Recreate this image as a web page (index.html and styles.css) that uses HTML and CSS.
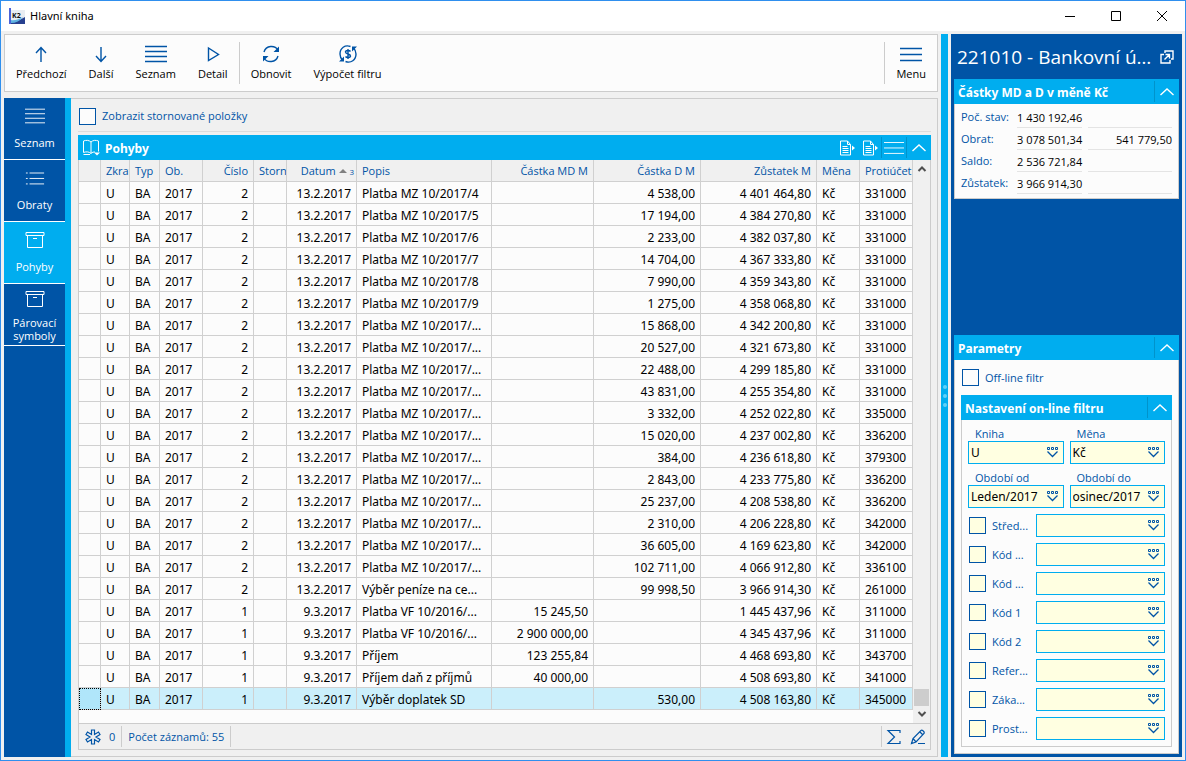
FILE: index.html
```html
<!DOCTYPE html>
<html lang="cs">
<head>
  <meta charset="UTF-8">
  <meta name="viewport" content="width=device-width, initial-scale=1.0">
  <title>Hlavní kniha</title>
  <link rel="stylesheet" href="styles.css">
</head>
<body>
  <svg class="sprite" aria-hidden="true">
    <symbol id="i-lines" viewBox="0 0 22 18"><path d="M0 1.5h22M0 6.5h22M0 11.5h22M0 16.5h22"/></symbol>
    <symbol id="i-menu" viewBox="0 0 22 18"><path d="M0 3.5h22M0 9.5h22M0 15.5h22"/></symbol>
    <symbol id="i-box" viewBox="0 0 20 18"><path d="M1 1.5h18v3H1zM2.500 4.500v12h15v-12M8 7.500h4"/></symbol>
    <symbol id="i-up" viewBox="0 0 14 8"><path d="M.5 7L7 1l6.500 6"/></symbol>
    <symbol id="i-doc" viewBox="0 0 16 16"><path d="M1.500 1h7l3 3.500V15H1.500zM8.500 1v3.500h3M3.500 6.500h5M3.500 8.500h6M3.500 10.500h6M3.500 12.500h6"/><path d="M13 5.500l3 2.500-3 2.500z" fill="currentColor" stroke="none"/></symbol>
    <symbol id="i-pick" viewBox="0 0 12 11"><path d="M.5 .5h2v2h-2zM4.500 .5h2v2h-2zM8.500 .5h2v2h-2z"/><path d="M.5 4.500l5 5 5-5" stroke-width="1.300"/></symbol>
  </svg>

  <header class="titlebar">
    <svg class="logo" viewBox="0 0 16 16" aria-hidden="true">
      <path d="M2 2h14v10H2z" fill="#e9edf2"/>
      <path d="M0 0h2v16H0z" fill="#4a63d8"/>
      <path d="M2 13c5 0 9-1 14-4v7H2z" fill="#27408f"/>
      <path d="M2 12c4 1 8-1 12-3-3 4-7 6-12 6z" fill="#5fb3e2"/>
      <text x="3" y="10" font-size="7" font-weight="700" fill="#111">K2</text>
    </svg>
    <h1>Hlavní kniha</h1>
    <div class="window-buttons">
      <button type="button" aria-label="Minimalizovat"><svg viewBox="0 0 12 12"><path d="M1 6.500h10"/></svg></button>
      <button type="button" aria-label="Maximalizovat"><svg viewBox="0 0 12 12"><path d="M1.500 1.500h9v9h-9z"/></svg></button>
      <button type="button" aria-label="Zavřít"><svg viewBox="0 0 12 12"><path d="M1 1l10 10M11 1L1 11"/></svg></button>
    </div>
  </header>

  <div class="window">
    <div class="left">
      <div class="toolbar">
        <button type="button"><svg class="bold" viewBox="0 0 22 18"><path d="M11 17V3M6 8l5-5.500L16 8"/></svg>Předchozí</button>
        <button type="button"><svg class="bold" viewBox="0 0 22 18"><path d="M11 2v14M6 11l5 5.500 5-5.500"/></svg>Další</button>
        <button type="button"><svg class="bold"><use href="#i-lines"/></svg>Seznam</button>
        <button type="button"><svg class="bold" viewBox="0 0 22 18"><path d="M6.500 3l10 6.500-10 6z"/></svg>Detail</button>
        <span class="divider"></span>
        <button type="button"><svg class="bold" viewBox="0 0 22 18"><path d="M4 7C6 0 15 0 18 5M18 11c-2 7-11 7-14 2"/><path d="M19 1.500V7h-5.500zM3 16.500V11h5.500z" fill="currentColor" stroke="none"/></svg>Obnovit</button>
        <button type="button"><svg class="bold" viewBox="0 0 22 18"><path d="M13.500 1.500C8-.5 3 3 3 9c0 2.500 1 4.500 2.500 6M8.500 16.500c5.500 2 10.500-1.500 10.500-7.500 0-2.500-1-4.500-2.500-6M13.500 6.500c-1-1.500-5-1.500-5 .5 0 2.500 5 1.500 5 4 0 2-4 2-5 .5M11 4v10"/><path d="M2 16.500h5V11.500zM20 1.500h-5v5z" fill="currentColor" stroke="none"/></svg>Výpočet filtru</button>
        <span class="divider push"></span>
        <button type="button"><svg class="bold"><use href="#i-menu"/></svg>Menu</button>
      </div>

      <div class="content">
        <nav class="sidebar">
          <a href="#seznam"><svg><use href="#i-lines"/></svg><span>Seznam</span></a>
          <a href="#obraty"><svg viewBox="0 0 22 18"><path d="M5 3.500h16M5 9.500h16M5 15.500h16M1 3.500h2M1 9.500h2M1 15.500h2"/></svg><span>Obraty</span></a>
          <a href="#pohyby" class="active"><svg><use href="#i-box"/></svg><span>Pohyby</span></a>
          <a href="#symboly" class="two-lines"><svg><use href="#i-box"/></svg><span>Párovací symboly</span></a>
        </nav>

        <main class="main">
          <div class="option-row">
            <input type="checkbox" id="storno">
            <label for="storno">Zobrazit stornované položky</label>
          </div>
          <section class="grid">
            <div class="bar grid-bar">
              <svg class="book" viewBox="0 0 18 17"><path d="M9 3C7 1 4 1 1.500 2v11.500C4 12.500 7 12.500 9 14.500 10 13 12 13 13 13M9 3c2-2 5-2 7.500-1v10.500M9 3v11.500M1.500 15.500H8"/><path d="M12 13.500h6l-3 3z" fill="currentColor" stroke="none"/></svg>
              <h2>Pohyby</h2>
              <button type="button" class="plain" aria-label="Export"><svg class="doc"><use href="#i-doc"/></svg></button>
              <button type="button" class="plain" aria-label="Sestava"><svg class="doc"><use href="#i-doc"/></svg></button>
              <button type="button" aria-label="Nabídka"><svg class="lines"><use href="#i-menu"/></svg></button>
              <button type="button" aria-label="Sbalit"><svg class="chevron"><use href="#i-up"/></svg></button>
            </div>
            <div class="grid-body">
              <table>
                <colgroup>
                  <col class="w-mark"><col class="w-zkr"><col class="w-typ"><col class="w-ob"><col class="w-cislo"><col class="w-storn"><col class="w-datum"><col><col class="w-md"><col class="w-d"><col class="w-zust"><col class="w-mena"><col class="w-ucet">
                </colgroup>
                <thead>
                  <tr><th></th><th>Zkrat</th><th>Typ</th><th>Ob.</th><th class="num">Číslo</th><th>Storn</th><th class="num sorted">Datum <i></i> <small>3</small></th><th>Popis</th><th class="num">Částka MD M</th><th class="num">Částka D M</th><th class="num">Zůstatek M</th><th>Měna</th><th>Protiúčet</th></tr>
                </thead>
                <tbody id="rows"></tbody>
              </table>
              <div class="scrollbar">
                <svg viewBox="0 0 10 8"><path d="M1.500 6L5 2.500 8.500 6"/></svg>
                <span class="thumb"></span>
                <svg viewBox="0 0 10 8"><path d="M1.500 2L5 5.500 8.500 2"/></svg>
              </div>
            </div>
            <footer class="status">
              <span class="status-item"><svg viewBox="0 0 16 16"><path d="M6.500 1h3v4.500l4-2.500 1.500 2.500L11 8l4 2.500-1.500 2.500-4-2.500V15h-3v-4.500l-4 2.500L1 10.500 5 8 1 5.500 2.500 3l4 2.500z"/></svg>0</span>
              <span class="status-item">Počet záznamů: 55</span>
              <span class="status-tools">
                <button type="button" aria-label="Součet"><svg viewBox="0 0 16 16"><path d="M14 4V1.500H2L8.500 8 2 14.500h12V12"/></svg></button>
                <button type="button" aria-label="Upravit"><svg viewBox="0 0 16 16"><path d="M1.500 14.500l1.500-5 8-8c1-1 4 1.500 3 3l-8 8.500zM3 9.500l3 3.500M10 3l3 3M8 14.500h7"/></svg></button>
              </span>
            </footer>
          </section>
        </main>
      </div>
    </div>

    <div class="splitter"><span></span><span></span><span></span></div>

    <aside class="right">
      <div class="account">
        <h2>221010 - Bankovní účet Kč</h2>
        <button type="button" aria-label="Otevřít"><svg viewBox="0 0 14 14"><path d="M5 3V1h8v8h-2M4 4.500H1V13h9v-3M4.500 9.500l5-5M5.500 4.500h4v4"/></svg></button>
      </div>

      <section class="panel">
        <div class="bar">
          <h3>Částky MD a D v měně Kč</h3>
          <button type="button" aria-label="Sbalit"><svg class="chevron"><use href="#i-up"/></svg></button>
        </div>
        <table class="amounts">
          <tr><th>Poč. stav:</th><td><span>1 430 192,46</span></td><td><span></span></td></tr>
          <tr><th>Obrat:</th><td><span>3 078 501,34</span></td><td><span>541 779,50</span></td></tr>
          <tr><th>Saldo:</th><td><span>2 536 721,84</span></td><td><span></span></td></tr>
          <tr><th>Zůstatek:</th><td><span>3 966 914,30</span></td><td><span></span></td></tr>
        </table>
      </section>

      <section class="panel params">
        <div class="bar">
          <h3>Parametry</h3>
          <button type="button" aria-label="Sbalit"><svg class="chevron"><use href="#i-up"/></svg></button>
        </div>
        <div class="params-body">
          <div class="offline">
            <input type="checkbox" id="offline">
            <label for="offline">Off-line filtr</label>
          </div>
          <div class="bar">
            <h3>Nastavení on-line filtru</h3>
            <button type="button" aria-label="Sbalit"><svg class="chevron"><use href="#i-up"/></svg></button>
          </div>
          <div class="filter">
            <div class="fields">
              <div class="field">
                <label for="kniha">Kniha</label>
                <div class="combo"><select id="kniha"><option>U</option></select><svg><use href="#i-pick"/></svg></div>
              </div>
              <div class="field">
                <label for="mena">Měna</label>
                <div class="combo"><select id="mena"><option>Kč</option></select><svg><use href="#i-pick"/></svg></div>
              </div>
              <div class="field">
                <label for="od">Období od</label>
                <div class="combo"><select id="od"><option>Leden/2017</option></select><svg><use href="#i-pick"/></svg></div>
              </div>
              <div class="field">
                <label for="do">Období do</label>
                <div class="combo"><select id="do"><option>osinec/2017</option></select><svg><use href="#i-pick"/></svg></div>
              </div>
            </div>
            <div id="codes"></div>
          </div>
        </div>
      </section>
    </aside>
  </div>

  <script>
    // číslo, datum, popis, částka MD, částka D, zůstatek, protiúčet
    const rows = [
      [2, '13.2.2017', 'Platba MZ 10/2017/4', '', '4 538,00', '4 401 464,80', '331000'],
      [2, '13.2.2017', 'Platba MZ 10/2017/5', '', '17 194,00', '4 384 270,80', '331000'],
      [2, '13.2.2017', 'Platba MZ 10/2017/6', '', '2 233,00', '4 382 037,80', '331000'],
      [2, '13.2.2017', 'Platba MZ 10/2017/7', '', '14 704,00', '4 367 333,80', '331000'],
      [2, '13.2.2017', 'Platba MZ 10/2017/8', '', '7 990,00', '4 359 343,80', '331000'],
      [2, '13.2.2017', 'Platba MZ 10/2017/9', '', '1 275,00', '4 358 068,80', '331000'],
      [2, '13.2.2017', 'Platba MZ 10/2017/...', '', '15 868,00', '4 342 200,80', '331000'],
      [2, '13.2.2017', 'Platba MZ 10/2017/...', '', '20 527,00', '4 321 673,80', '331000'],
      [2, '13.2.2017', 'Platba MZ 10/2017/...', '', '22 488,00', '4 299 185,80', '331000'],
      [2, '13.2.2017', 'Platba MZ 10/2017/...', '', '43 831,00', '4 255 354,80', '331000'],
      [2, '13.2.2017', 'Platba MZ 10/2017/...', '', '3 332,00', '4 252 022,80', '335000'],
      [2, '13.2.2017', 'Platba MZ 10/2017/...', '', '15 020,00', '4 237 002,80', '336200'],
      [2, '13.2.2017', 'Platba MZ 10/2017/...', '', '384,00', '4 236 618,80', '379300'],
      [2, '13.2.2017', 'Platba MZ 10/2017/...', '', '2 843,00', '4 233 775,80', '336200'],
      [2, '13.2.2017', 'Platba MZ 10/2017/...', '', '25 237,00', '4 208 538,80', '336200'],
      [2, '13.2.2017', 'Platba MZ 10/2017/...', '', '2 310,00', '4 206 228,80', '342000'],
      [2, '13.2.2017', 'Platba MZ 10/2017/...', '', '36 605,00', '4 169 623,80', '342000'],
      [2, '13.2.2017', 'Platba MZ 10/2017/...', '', '102 711,00', '4 066 912,80', '336100'],
      [2, '13.2.2017', 'Výběr peníze na ce...', '', '99 998,50', '3 966 914,30', '261000'],
      [1, '9.3.2017', 'Platba VF 10/2016/...', '15 245,50', '', '1 445 437,96', '311000'],
      [1, '9.3.2017', 'Platba VF 10/2016/...', '2 900 000,00', '', '4 345 437,96', '311000'],
      [1, '9.3.2017', 'Příjem', '123 255,84', '', '4 468 693,80', '343700'],
      [1, '9.3.2017', 'Příjem daň z příjmů', '40 000,00', '', '4 508 693,80', '341000'],
      [1, '9.3.2017', 'Výběr doplatek SD', '', '530,00', '4 508 163,80', '345000']
    ];

    document.getElementById('rows').innerHTML = rows.map((r, i) => `
      <tr${i === rows.length - 1 ? ' class="selected"' : ''}>
        <td></td><td>U</td><td>BA</td><td>2017</td><td class="num">${r[0]}</td><td></td>
        <td class="num">${r[1]}</td><td>${r[2]}</td><td class="num">${r[3]}</td><td class="num">${r[4]}</td>
        <td class="num">${r[5]}</td><td>Kč</td><td>${r[6]}</td>
      </tr>`).join('');

    const codes = ['Střed...', 'Kód ...', 'Kód ...', 'Kód 1', 'Kód 2', 'Refer...', 'Záka...', 'Prost...'];

    document.getElementById('codes').innerHTML = codes.map((name, i) => `
      <div class="code-row">
        <input type="checkbox" id="code${i}">
        <label for="code${i}">${name}</label>
        <div class="combo"><select aria-label="${name}"><option></option></select><svg><use href="#i-pick"/></svg></div>
      </div>`).join('');
  </script>
</body>
</html>
```

FILE: styles.css
```css
* {
  box-sizing: border-box;
  margin: 0;
  padding: 0;
}

body {
  min-height: 100vh;
  display: flex;
  flex-direction: column;
  border: 1px solid #2f8fee;
  background: #f0f0f0;
  font-family: "Open Sans", "Noto Sans", sans-serif;
  font-size: 11px;
  line-height: 14px;
  color: #000;
}

button {
  border: 0;
  background: none;
  color: inherit;
  font: inherit;
  cursor: pointer;
}

svg {
  display: block;
  flex: none;
  fill: none;
  stroke: currentColor;
}

.sprite {
  position: absolute;
  width: 0;
  height: 0;
}

input[type="checkbox"] {
  appearance: none;
  flex: none;
  width: 17px;
  height: 17px;
  border: 1px solid #0054a6;
  background: #fcfcfc;
}

label {
  color: #0054a6;
}

/* title bar */
.titlebar {
  display: flex;
  align-items: center;
  height: 30px;
  padding-left: 8px;
  background: #fff;
}

.titlebar h1 {
  margin-left: 5px;
  font-family: "Noto Sans", sans-serif;
  font-size: 11px;
  font-weight: 400;
}

.logo {
  width: 16px;
  height: 16px;
  stroke: none;
}

.window-buttons {
  display: flex;
  margin-left: auto;
}

.window-buttons button {
  width: 46px;
  height: 30px;
  display: flex;
  align-items: center;
  justify-content: center;
}

.window-buttons svg {
  width: 12px;
  height: 12px;
}

.window {
  flex: 1;
  display: flex;
  gap: 3px;
  padding: 3px;
}

.left {
  flex: 1;
  min-width: 0;
  display: flex;
  flex-direction: column;
  gap: 6px;
}

/* toolbar */
.toolbar {
  display: flex;
  align-items: center;
  height: 58px;
  border: 1px solid #ccc;
  background: #fcfcfc;
}

.toolbar button {
  display: flex;
  flex-direction: column;
  align-items: center;
  gap: 4px;
  padding: 0 11px;
}

.toolbar svg {
  width: 22px;
  height: 18px;
  color: #0054a6;
}

.bold {
  stroke-width: 1.4;
}

.divider {
  width: 1px;
  height: 42px;
  background: #ccc;
}

.divider.push {
  margin-left: auto;
}

.content {
  flex: 1;
  display: flex;
}

/* section navigation */
.sidebar {
  width: 67px;
  border-right: 6px solid #00adef;
  background: #0054a6;
}

.sidebar a {
  display: flex;
  flex-direction: column;
  align-items: center;
  gap: 11px;
  height: 62px;
  padding-top: 9px;
  border-bottom: 1px solid #fff;
  color: #fff;
  text-align: center;
  text-decoration: none;
}

.sidebar a.active {
  background: #00adef;
}

.sidebar a.two-lines {
  gap: 8px;
  padding-top: 6px;
  line-height: 13px;
}

.sidebar svg {
  width: 20px;
  height: 18px;
}

/* main list */
.main {
  flex: 1;
  min-width: 0;
  display: flex;
  flex-direction: column;
  padding: 0 6px 6px 7px;
  border: 1px solid #ccc;
  border-left: 0;
}

.option-row {
  display: flex;
  align-items: center;
  gap: 6px;
  height: 33px;
  margin-bottom: 3px;
  padding: 2px 1px 0;
  border-bottom: 1px solid #dcdcdc;
}

.bar {
  display: flex;
  align-items: center;
  height: 25px;
  padding-left: 4px;
  background: #00adef;
  color: #fff;
}

.bar h2,
.bar h3 {
  flex: 1;
  padding-top: 2px;
  font-family: "Noto Sans", sans-serif;
  font-size: 12px;
  font-weight: 700;
  white-space: nowrap;
}

.bar button {
  width: 25px;
  height: 21px;
  display: flex;
  align-items: center;
  justify-content: center;
  border-left: 1px solid #0093cb;
}

.bar button.plain {
  width: 23px;
  border-left: 0;
}

.book {
  width: 18px;
  height: 17px;
  margin-right: 5px;
}

.chevron {
  width: 14px;
  height: 8px;
  stroke-width: 1.4;
}

.lines {
  width: 20px;
  height: 17px;
}

.doc {
  width: 16px;
  height: 16px;
}

.grid {
  flex: 1;
  display: flex;
  flex-direction: column;
}

.grid-body {
  flex: 1;
  display: flex;
  border: 1px solid #ccc;
  border-width: 0 1px;
  background: #fcfcfc;
}

.grid-body table {
  flex: 1;
  align-self: flex-start;
  min-width: 0;
  width: 100%;
  table-layout: fixed;
  border-collapse: separate;
  border-spacing: 0;
}

.w-mark { width: 22px; }
.w-zkr { width: 29px; }
.w-typ { width: 30px; }
.w-ob { width: 43px; }
.w-cislo { width: 51px; }
.w-storn { width: 33px; }
.w-datum { width: 70px; }
.w-md { width: 102px; }
.w-d { width: 107px; }
.w-zust { width: 116px; }
.w-mena { width: 43px; }
.w-ucet { width: 53px; }

.grid-body th,
.grid-body td {
  height: 22px;
  padding: 0 5px;
  border-right: 1px solid #d0d0d0;
  border-bottom: 1px solid #d0d0d0;
  overflow: hidden;
  text-align: left;
  white-space: nowrap;
}

.grid-body th {
  background: #f0f0f0;
  color: #0054a6;
  font-weight: 400;
}

.grid-body td {
  padding-top: 2px;
  font-family: "Noto Sans", sans-serif;
  font-size: 12px;
}

.grid-body .num {
  text-align: right;
}

.grid-body .sorted {
  padding-right: 2px;
}

.sorted i {
  display: inline-block;
  border: 4px solid transparent;
  border-top: 0;
  border-bottom: 4px solid #808080;
  vertical-align: 2px;
}

.sorted small {
  font-size: 8px;
  line-height: 8px;
}

.selected td {
  background: #cbeffb;
}

.selected td:first-child {
  background: #b0e6fa;
  outline: 1px dotted #000;
  outline-offset: -1px;
}

.scrollbar {
  display: flex;
  flex-direction: column;
  align-items: center;
  width: 17px;
  padding: 5px 0;
  background: #f0f0f0;
  color: #505050;
}

.scrollbar svg {
  width: 10px;
  height: 8px;
  stroke-width: 2;
}

.thumb {
  width: 15px;
  height: 17px;
  margin: auto 0 4px;
  background: #cdcdcd;
}

.status {
  display: flex;
  align-items: center;
  height: 27px;
  border: 1px solid #ccc;
  color: #0054a6;
}

.status-item,
.status-tools {
  display: flex;
  align-items: center;
  gap: 8px;
  height: 21px;
  padding: 0 6px;
  border-right: 1px solid #ccc;
}

.status-tools {
  margin-left: auto;
  padding: 0 4px;
  border-right: 0;
  border-left: 1px solid #ccc;
}

.status svg {
  width: 16px;
  height: 16px;
  stroke-width: 1.2;
}

/* splitter */
.splitter {
  display: flex;
  flex-direction: column;
  align-items: center;
  justify-content: center;
  gap: 5px;
  width: 7px;
  background: #00adef;
}

.splitter span {
  width: 4px;
  height: 4px;
  border-radius: 50%;
  background: #5fd0f8;
}

/* right panel */
.right {
  display: flex;
  flex-direction: column;
  width: 231px;
  padding: 0 3px 3px;
  background: #0054a6;
}

.account {
  display: flex;
  align-items: center;
  gap: 8px;
  height: 45px;
  padding: 0 5px 0 3px;
  color: #fff;
}

.account h2 {
  flex: 1;
  min-width: 0;
  overflow: hidden;
  font-size: 19px;
  line-height: 26px;
  font-weight: 400;
  text-overflow: ellipsis;
  white-space: nowrap;
}

.account svg {
  width: 14px;
  height: 14px;
  stroke-width: 1.4;
}

.amounts {
  width: 100%;
  padding: 2px 6px 4px;
  border: 1px solid #ccc;
  border-top: 0;
  background: #fcfcfc;
  border-spacing: 0;
}

.amounts th {
  width: 56px;
  color: #0054a6;
  font-weight: 400;
  text-align: left;
  white-space: nowrap;
}

.amounts td {
  text-align: right;
}

.amounts td:nth-child(2) {
  width: 69px;
  padding-right: 6px;
}

.amounts span {
  display: block;
  height: 22px;
  padding-top: 5px;
  border-bottom: 1px solid #e4e4e4;
  white-space: nowrap;
}

.params {
  margin-top: auto;
}

.params-body {
  padding: 0 6px 6px;
  border: 1px solid #ccc;
  border-top: 0;
  background: #fcfcfc;
}

.offline {
  display: flex;
  align-items: center;
  gap: 6px;
  height: 35px;
  padding-left: 1px;
}

.filter {
  padding: 7px 6px 6px;
  border: 1px solid #ccc;
  border-top: 0;
}

.fields {
  display: grid;
  grid-template-columns: 1fr 1fr;
  gap: 7px 6px;
}

.field label {
  display: block;
  padding-left: 7px;
}

.combo {
  flex: 1;
  min-width: 0;
  display: flex;
  align-items: center;
  height: 23px;
  padding-right: 4px;
  border: 1px solid #00adef;
  background: #ffffe1;
  color: #0054a6;
}

.combo select {
  appearance: none;
  flex: 1;
  min-width: 0;
  padding-left: 2px;
  border: 0;
  background: none;
  color: #000;
  font: inherit;
  font-family: "Noto Sans", sans-serif;
  font-size: 12px;
}

.combo svg {
  width: 12px;
  height: 11px;
}

.code-row {
  display: flex;
  align-items: center;
  margin-top: 6px;
  padding-left: 1px;
}

.code-row input {
  background: #ffffe1;
}

.code-row label {
  width: 50px;
  padding-left: 6px;
  white-space: nowrap;
}
```
